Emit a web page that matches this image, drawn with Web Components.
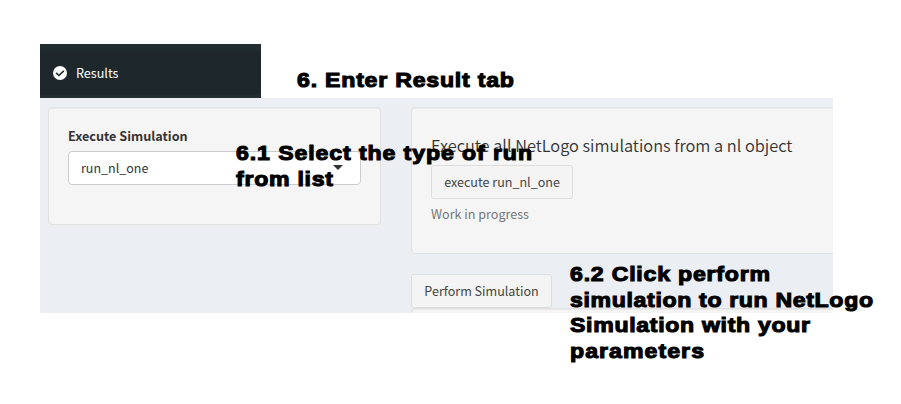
<!DOCTYPE html>
<html lang="en"><head><meta charset="utf-8"><title>Run simulation</title>
<style>html,body{margin:0;background:#fff;overflow:hidden}body{height:404px}</style></head>
<body><guide-page></guide-page>
<script>
const define = (name, html) => customElements.define(name, class extends HTMLElement {
  constructor(){ super(); this.attachShadow({mode:'open'}).innerHTML = html; }
});
define('tab-bar', `<style>
:host{display:flex;box-sizing:border-box;width:221px;height:54px;padding:7px 0 3px;background:#222d32}
div{flex:1;display:flex;align-items:center;gap:9px;padding:8px 13px 8px;background:#1e282c;color:#fff;font-size:12.6px;line-height:20px}
svg{width:14px;height:14px;display:block}
</style><div><svg viewBox="0 0 14 14"><circle cx="7" cy="7" r="7" fill="#fff"/><path d="M3.2 6.9l2.7 2.6 4.9-4.7" fill="none" stroke="#1e282c" stroke-width="1.6"/></svg><span><slot></slot></span></div>`);
define('well-panel', `<style>
:host{display:block;box-sizing:border-box;background:#f5f5f5;border:1px solid #e1e1e2;border-radius:4px;padding:19px;box-shadow:inset 0 1px 1px rgba(0,0,0,.05)}
</style><slot></slot>`);
define('action-button', `<style>
:host{display:flex;box-sizing:border-box;height:34px;align-items:center;justify-content:center;border:1px solid #ddd;border-radius:3px;background:#f4f4f4;color:#444;font-size:12.55px;line-height:20px;white-space:nowrap}
</style><slot></slot>`);
define('select-box', `<style>
:host{display:flex;box-sizing:border-box;height:34px;width:293px;align-items:center;justify-content:space-between;border:1px solid #ccc;border-radius:4px;background:#fff;color:#333;padding:0 17px 0 12px;font-size:12.5px;line-height:20px}
i{border:5px solid transparent;border-top-color:#333;border-bottom:0;margin-top:-1px}
</style><span><slot></slot></span><i></i>`);
customElements.define('callout-note', class extends HTMLElement {
  connectedCallback(){
    const root = this.attachShadow({mode:'open'});
    root.innerHTML = `<style>
:host{position:absolute;color:#000;font:bold 21px/25.6px "Liberation Sans",Arial,sans-serif;-webkit-text-stroke:1.1px #000;white-space:nowrap}
span{display:block;width:max-content;transform:scaleX(1.1);transform-origin:0 0}
</style>`;
    for (const line of this.getAttribute('lines').split('|')) {
      const [text, width] = line.split('@');
      const s = document.createElement('span');
      s.textContent = text;
      root.append(s);
      const natural = s.getBoundingClientRect().width / 1.1;
      s.style.letterSpacing = ((+width / 1.1 - natural) / (text.length - 1)) + 'px';
    }
  }
});
define('guide-page', `<style>
:host{display:block;box-sizing:border-box;position:relative;width:901px;height:404px;padding:44px 0 0 40px;font-family:"Noto Sans CJK SC",sans-serif;color:#333}
main{display:flex;gap:30px;box-sizing:border-box;width:793px;height:215px;padding:9px 0 0 8px;background:#ebeff4;overflow:hidden}
.left{width:333px;height:118px}
.right{flex:1;min-width:0;display:flex;flex-direction:column}
.right>well-panel{width:450px;height:147px;flex:none}
.next{height:60px!important}
label{display:block;font-weight:700;font-size:12.65px;line-height:20px;margin-bottom:5px;margin-top:-1px}
h4{margin:8px 0 10px;font-weight:350;font-size:16.36px;line-height:20px;white-space:nowrap}
.run{width:142px}
p{margin:5px 0 0;font-size:12.58px;line-height:20px;color:#777}
.perform{width:141px;margin-top:20px;flex:none}
</style>
<tab-bar>Results</tab-bar>
<main>
<well-panel class="left"><label>Execute Simulation</label><select-box>run_nl_one</select-box></well-panel>
<section class="right">
<well-panel><h4>Execute all NetLogo simulations from a nl object</h4><action-button class="run">execute run_nl_one</action-button><p>Work in progress</p></well-panel>
<action-button class="perform">Perform Simulation</action-button>
<well-panel class="next"></well-panel>
</section></main>
<callout-note style="left:297px;top:67px" lines="6. Enter Result tab@217"></callout-note>
<callout-note style="left:236px;top:140px" lines="6.1 Select the type of run@296|from list@97"></callout-note>
<callout-note style="left:570px;top:261px" lines="6.2 Click perform@200|simulation to run NetLogo@303|Simulation with your@240|parameters@134"></callout-note>`);
</script></body></html>
